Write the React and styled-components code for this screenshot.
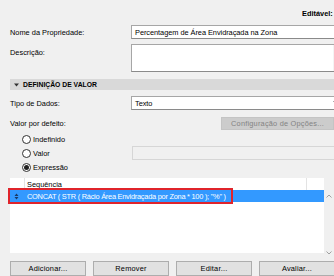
import React from 'react'
import styled, { createGlobalStyle } from 'styled-components'

const Global = createGlobalStyle`
  html, body {
    margin: 0;
    padding: 0;
    background: #f0f0f0;
    overflow: hidden;
  }
  body {
    font-family: "Liberation Sans", Arial, sans-serif;
    font-size: 7.4px;
    color: #000;
  }
`

const Page = styled.div`
  width: 352px;
  height: 276px;
  padding-left: 10px;
  box-sizing: border-box;
  display: flex;
  flex-direction: column;
  overflow: hidden;
`

const TopBar = styled.div`
  height: 26px;
  display: flex;
  align-items: flex-end;
  padding: 0 0 7px 292px;
  box-sizing: border-box;
  font-weight: 700;
  white-space: nowrap;
`

const Row = styled.div`
  display: grid;
  grid-template-columns: 121px 1fr;
  align-items: ${p => p.$top ? 'start' : 'center'};
  margin-top: ${p => p.$gap || 0}px;
`

const Label = styled.div`
  padding-top: ${p => p.$top ? 4 : 0}px;
  white-space: nowrap;
`

const Field = styled.div`
  height: ${p => p.$h || 14}px;
  box-sizing: border-box;
  background: #fff;
  border: 1px solid #a6a6a6;
  border-bottom-color: #8a8a8a;
  border-right: none;
  display: flex;
  align-items: ${p => p.$top ? 'stretch' : 'center'};
  padding-left: 3px;
  white-space: nowrap;
  overflow: hidden;
  letter-spacing: -0.05px;
`

const AreaText = styled.div`
  flex: 1;
`

const AreaScroll = styled.div`
  width: 10px;
  margin-right: 9px;
  background: #f4f4f4;
  display: flex;
  flex-direction: column;
  justify-content: space-between;
  align-items: center;
  padding: 4px 0 3px;
`

const SelectText = styled.div`
  flex: 1;
`

const Chevron = styled.svg`
  width: 6px;
  height: 4px;
  margin-right: 13px;
`

const SectionHead = styled.div`
  margin-top: 7px;
  height: 11px;
  background: #d9d9d9;
  display: flex;
  align-items: center;
  padding-left: 4px;
  gap: 4px;
  font-weight: 700;
  font-size: 6.8px;
`

const SmallBtn = styled.div`
  width: 113px;
  height: 13px;
  box-sizing: border-box;
  margin-left: 90px;
  background: #cccccc;
  border: 1px solid #c4c4c4;
  color: #838383;
  display: flex;
  align-items: center;
  justify-content: center;
  letter-spacing: 0.2px;
`

const RadioLine = styled.div`
  display: flex;
  align-items: center;
  gap: 2px;
  padding-left: 12px;
`

const Circle = styled.span`
  width: 9px;
  height: 9px;
  box-sizing: border-box;
  border-radius: 50%;
  border: 1px solid #333;
  background: #fff;
  display: flex;
  align-items: center;
  justify-content: center;
  &::after {
    content: '';
    width: 5px;
    height: 5px;
    border-radius: 50%;
    background: ${p => p.$on ? '#222' : 'transparent'};
  }
`

const DisabledField = styled.div`
  height: 14px;
  box-sizing: border-box;
  margin-left: 1px;
  border: 1px solid #d6d6d6;
  border-right: none;
  background: #f0f0f0;
`

const List = styled.div`
  margin-top: 6px;
  height: 80px;
  width: 324px;
  display: flex;
  position: relative;
`

const ListBody = styled.div`
  flex: 1;
  height: 75px;
  background: #fff;
  display: flex;
  flex-direction: column;
`

const HeadRow = styled.div`
  height: 12px;
  display: grid;
  grid-template-columns: 15px 1fr 17px;
`

const HeadCell = styled.div`
  border-right: ${p => p.$line ? '1px solid #e3e3e3' : 'none'};
  display: flex;
  align-items: center;
  padding-left: ${p => p.$pad || 0}px;
`

const ItemRow = styled.div`
  height: 12px;
  background: ${p => p.$selected ? '#3399ff' : '#fff'};
  color: ${p => p.$selected ? '#fff' : '#000'};
  display: flex;
  align-items: center;
  white-space: nowrap;
  letter-spacing: -0.25px;
`

const Grip = styled.svg`
  width: 5px;
  height: 7px;
  margin: 0 8px 0 4px;
`

const Highlight = styled.div`
  position: absolute;
  left: -2px;
  top: 10px;
  width: 225px;
  height: 16px;
  box-sizing: border-box;
  border: 2px solid #e0242b;
`

const ListScroll = styled.div`
  width: 10px;
  display: flex;
  flex-direction: column;
  justify-content: space-between;
  align-items: center;
  padding: 16px 0 1px;
`

const ButtonBar = styled.div`
  margin-top: 5px;
  display: flex;
  gap: 7px;
`

const Button = styled.div`
  width: 76px;
  height: 15px;
  box-sizing: border-box;
  background: #e1e1e1;
  border: 1px solid #adadad;
  display: flex;
  align-items: center;
  justify-content: center;
  letter-spacing: 0.2px;
`

const Arrow = ({ up, color = '#a0a0a0' }) => (
  <svg width="6" height="4" viewBox="0 0 6 4">
    <path d={up ? 'M0.5 3.5 L3 1 L5.5 3.5' : 'M0.5 0.5 L3 3 L5.5 0.5'} fill="none" stroke={color} strokeWidth="1" />
  </svg>
)

export default function App() {
  return (
    <>
      <Global />
      <Page>
        <TopBar>Editável: Todos</TopBar>

        <Row>
          <Label>Nome da Propriedade:</Label>
          <Field>Percentagem de Área Envidraçada na Zona</Field>
        </Row>

        <Row $top $gap={5}>
          <Label $top>Descrição:</Label>
          <Field $h={28} $top>
            <AreaText />
            <AreaScroll>
              <Arrow up />
              <Arrow />
            </AreaScroll>
          </Field>
        </Row>

        <SectionHead>
          <svg width="5" height="4" viewBox="0 0 5 4">
            <path d="M0 0.5 L5 0.5 L2.5 3.5 Z" fill="#333" />
          </svg>
          DEFINIÇÃO DE VALOR
        </SectionHead>

        <Row $gap={6}>
          <Label>Tipo de Dados:</Label>
          <Field>
            <SelectText>Texto</SelectText>
            <Chevron viewBox="0 0 6 4">
              <path d="M0.5 0.5 L3 3 L5.5 0.5" fill="none" stroke="#555" strokeWidth="1" />
            </Chevron>
          </Field>
        </Row>

        <Row $gap={7}>
          <Label>Valor por defeito:</Label>
          <SmallBtn>Configuração de Opções...</SmallBtn>
        </Row>

        <Row $gap={5}>
          <RadioLine><Circle />Indefinido</RadioLine>
        </Row>

        <Row $gap={2}>
          <RadioLine><Circle />Valor</RadioLine>
          <DisabledField />
        </Row>

        <Row $gap={3}>
          <RadioLine><Circle $on />Expressão</RadioLine>
        </Row>

        <List>
          <ListBody>
            <HeadRow>
              <HeadCell $line />
              <HeadCell $line $pad={2}>Sequência</HeadCell>
              <HeadCell />
            </HeadRow>
            <ItemRow $selected>
              <Grip viewBox="0 0 5 7">
                <path d="M0.5 3 L2.5 0.5 L4.5 3 Z M0.5 4 L2.5 6.5 L4.5 4 Z" fill="#1a3a66" />
              </Grip>
              CONCAT ( STR ( Rácio Área Envidraçada por Zona * 100 ); "%" )
            </ItemRow>
          </ListBody>
          <ListScroll>
            <Arrow up />
            <Arrow />
          </ListScroll>
          <Highlight />
        </List>

        <ButtonBar>
          <Button>Adicionar...</Button>
          <Button>Remover</Button>
          <Button>Editar...</Button>
          <Button>Avaliar...</Button>
        </ButtonBar>
      </Page>
    </>
  )
}
